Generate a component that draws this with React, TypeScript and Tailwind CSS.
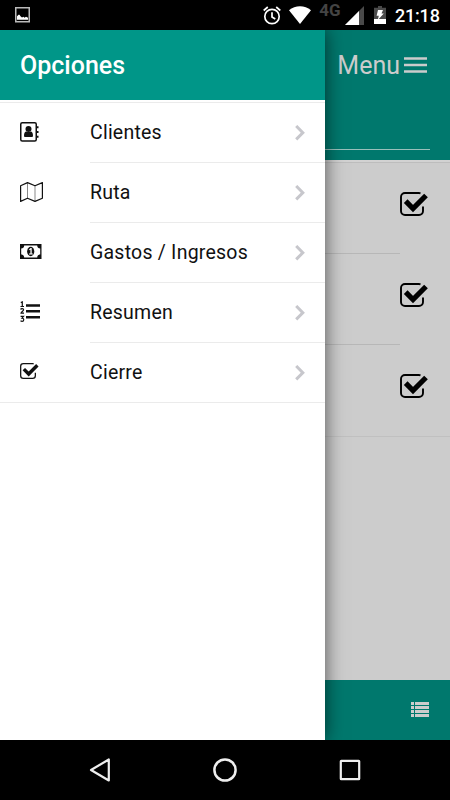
import type { ReactNode } from "react";

function CheckSquare({ className }: { className: string }) {
  return (
    <svg className={className} viewBox="0 0 28 24" fill="none">
      <path d="M20.500 1.300C20 1.100 19.500 1 19 1H5C2.800 1 1 2.800 1 5v14c0 2.200 1.800 4 4 4h14c2.200 0 4-1.800 4-4v-4.500" stroke="currentColor" strokeWidth="1.900" />
      <path d="M5.700 9.200 13 16.500 26 3.500" stroke="currentColor" strokeWidth="5.200" />
    </svg>
  );
}

function AddressBook() {
  return (
    <svg className="-mt-0.5" width="19" height="20" viewBox="0 0 19 20" fill="currentColor">
      <rect x=".75" y=".75" width="15.500" height="18.200" rx="1.500" fill="none" stroke="currentColor" strokeWidth="1.500" />
      <circle cx="8.500" cy="7" r="3" />
      <path d="M4 14.100c0-3 .8-4.600 2.400-4.600 1 .8 3.200.8 4.200 0 1.600 0 2.400 1.600 2.400 4.600 0 .5-.4.900-.9.900H4.900c-.5 0-.9-.4-.9-.9Z" />
      <path d="M17 4.200h1.500v2H17zM17 9h1.500v2H17zM17 13.800h1.500v2H17z" />
    </svg>
  );
}

function MapFold() {
  return (
    <svg className="-mt-[3px]" width="23" height="20" viewBox="0 0 23 20" fill="none" stroke="currentColor" strokeLinejoin="round">
      <path d="M.6 3.700 7.500.6l7.500 3.100L22.400.6v15.700L15 19.400l-7.500-3.100L.6 19.400Z" strokeWidth="1.200" />
      <path d="M7.500.6v15.700M15 3.700v15.700" strokeWidth=".5" />
    </svg>
  );
}

function Money() {
  return (
    <svg className="-mt-[3px]" width="22" height="15" viewBox="0 0 22 15">
      <path d="M0 0h21.500v15H0z" fill="currentColor" />
      <path d="M4.200 1.500h13c0 1.700 1.300 3 3 3v6c-1.700 0-3 1.300-3 3h-13c0-1.700-1.300-3-3-3v-6c1.700 0 3-1.300 3-3Z" fill="#fff" />
      <ellipse cx="10.700" cy="7.500" rx="3.600" ry="4.700" fill="currentColor" />
      <path d="M9 5.400 10.600 4h1.100v5.500h1.100v1H9v-1h1.400V5.700l-.9.500Z" fill="#fff" />
    </svg>
  );
}

function NumberedList() {
  return (
    <svg className="-mt-[3px]" width="20" height="21" viewBox="0 0 20 21" fill="none" stroke="currentColor">
      <path d="M6 4.500h14M6 10.200h14M6 16.200h14" strokeWidth="2.600" />
      <path d="M.8 1.600 2.300.9v5M.5 5.500h3.500M.6 8.500c.3-1.300 3-1.300 3 .2C3.600 9.900 1 11 1 12.200h3M.6 15.300h2.900L2 17.100c2.400 0 2.200 3.200.1 3.200-.6 0-1-.1-1.600-.5" strokeWidth="1.200" />
    </svg>
  );
}

const options: { label: string; icon: ReactNode }[] = [
  { label: "Clientes", icon: <AddressBook /> },
  { label: "Ruta", icon: <MapFold /> },
  { label: "Gastos / Ingresos", icon: <Money /> },
  { label: "Resumen", icon: <NumberedList /> },
  { label: "Cierre", icon: <CheckSquare className="-mt-[3px] h-4 w-[18.700px]" /> },
];

function StatusBar() {
  return (
    <header className="flex h-[30px] shrink-0 items-center bg-black pl-[15px] pr-[11px] text-white">
      <svg width="15" height="16" viewBox="0 0 15 16">
        <path d="M.75.750h13.500v14H.75z" fill="none" stroke="#bbb" strokeWidth="1.500" />
        <path d="M2 12.800V9.300l1.500-1.600h1l1 1.500L7 10.500l1.500-.8 1 1 1.500-1 2 1v2.100Z" fill="#fff" />
      </svg>
      <svg className="ml-auto" width="18" height="19" viewBox="0 0 18 19" fill="none" stroke="#fff" strokeWidth="1.700">
        <circle cx="9" cy="10.500" r="7.200" />
        <path d="M.7 4.500 4.800 1M17.300 4.500 13.200 1M9 6.200v4.800l3.300 2" />
      </svg>
      <svg className="ml-2" width="22" height="18" viewBox="0 0 22 18" fill="#fff">
        <path d="M11 18 0 4.200C6.200-1.200 15.800-1.200 22 4.200Z" />
      </svg>
      <span className="-mt-2.5 ml-2 w-[22px] text-center font-['Roboto'] text-[17px] font-bold leading-none text-[#444]">4G</span>
      <svg className="ml-1" width="19" height="19" viewBox="0 0 19 19">
        <path d="M0 19 19 0v19Z" fill="#4a4a4a" />
        <path d="M0 19 14 5v14Z" fill="#fff" />
      </svg>
      <svg className="ml-2.5" width="12" height="18" viewBox="0 0 12 18">
        <path d="M4 0h4v1.800h4V18H0V1.800h4Z" fill="#4a4a4a" />
        <path d="M0 13h12v5H0zM4 4h5L7.500 7.500h2.300L3.800 14l1-4.200H2.600Z" fill="#fff" />
      </svg>
      <span className="ml-[9px] mt-0.5 w-11 whitespace-nowrap font-['Roboto'] text-[18px] font-medium leading-none tracking-[-0.2px]">21:18</span>
    </header>
  );
}

function MainPage() {
  return (
    <div className="flex h-full flex-col bg-[#ccc]">
      <div className="flex h-[130px] shrink-0 flex-col justify-between bg-[#00786d] pb-2.5">
        <div className="flex h-[70px] items-center justify-end pr-[23.500px] text-[#ccc]">
          <span className="mt-0.5 text-[25px]">Menu</span>
          <svg className="ml-[3.500px]" width="23" height="16" viewBox="0 0 23 16" stroke="currentColor" strokeWidth="2.500">
            <path d="M0 1.500h23M0 8h23M0 14.500h23" />
          </svg>
        </div>
        <div className="mr-5 h-px bg-[#99c0bb]" />
      </div>
      <div className="h-[3px] border-b border-[#bdbdbd] bg-[#d2d2d2]" />
      <ul className="border-b border-[#c0c0c0]">
        {[0, 1, 2].map((row) => (
          <li key={row} className="relative flex h-[91px] justify-end pr-[22px] pt-[28.500px] text-black">
            <CheckSquare className="h-6 w-7" />
            {row < 2 && <div className="absolute bottom-0 left-0 right-[50px] h-px bg-[#b7b7b7]" />}
          </li>
        ))}
      </ul>
      <footer className="mt-auto flex h-[60px] items-center justify-end bg-[#00786d] pb-px pr-[21px]">
        <svg width="18" height="15" viewBox="0 0 18 15" fill="#ccc">
          <path d="M0 0h3v3H0zM4 0h14v3H4zM0 4h3v3H0zM4 4h14v3H4zM0 8h3v3H0zM4 8h14v3H4zM0 12h3v3H0zM4 12h14v3H4z" />
        </svg>
      </footer>
    </div>
  );
}

function Drawer() {
  return (
    <nav className="absolute inset-y-0 left-0 w-[325px] bg-white shadow-[0_0_18px_rgba(0,0,0,0.6)]">
      <h1 className="flex h-[70px] items-center bg-[#009688] pl-5 pt-0.5 text-[25px] font-medium text-white">Opciones</h1>
      <ul className="mt-0.5 border-y border-[#ebebeb]">
        {options.map(({ label, icon }, i) => (
          <li key={label} className="flex h-[60px] pl-5 text-[#111] last:h-[59px]">
            <div className="flex w-[70px] items-center">{icon}</div>
            <div className={`flex flex-1 items-center justify-between pr-5 ${i < options.length - 1 ? "border-b border-[#ebebeb]" : ""}`}>
              <span className="text-[19.500px] tracking-[0.23px]">{label}</span>
              <svg width="10" height="16" viewBox="0 0 10 16" fill="none" stroke="#c7c7cc" strokeWidth="3">
                <path d="m1.200 1 6.600 6.700-6.600 6.700" />
              </svg>
            </div>
          </li>
        ))}
      </ul>
    </nav>
  );
}

function NavBar() {
  return (
    <footer className="flex h-[60px] shrink-0 items-center justify-between bg-black px-[89px] text-[#eee]">
      <svg width="22" height="24" viewBox="0 0 22 24" fill="none" stroke="currentColor" strokeWidth="2.200" strokeLinejoin="round">
        <path d="M19.800 1.500v21L2 12Z" />
      </svg>
      <svg width="24" height="24" viewBox="0 0 24 24" fill="none" stroke="currentColor" strokeWidth="2.500">
        <circle cx="12" cy="12" r="10.600" />
      </svg>
      <svg width="22" height="22" viewBox="0 0 22 22" fill="none" stroke="currentColor" strokeWidth="2.200">
        <rect x="1.800" y="1.800" width="18.400" height="18.400" rx=".5" />
      </svg>
    </footer>
  );
}

export default function App() {
  return (
    <div className="flex h-[800px] w-[450px] flex-col overflow-hidden font-['Roboto',sans-serif]">
      <StatusBar />
      <main className="relative min-h-0 flex-1 overflow-hidden">
        <MainPage />
        <Drawer />
      </main>
      <NavBar />
    </div>
  );
}
